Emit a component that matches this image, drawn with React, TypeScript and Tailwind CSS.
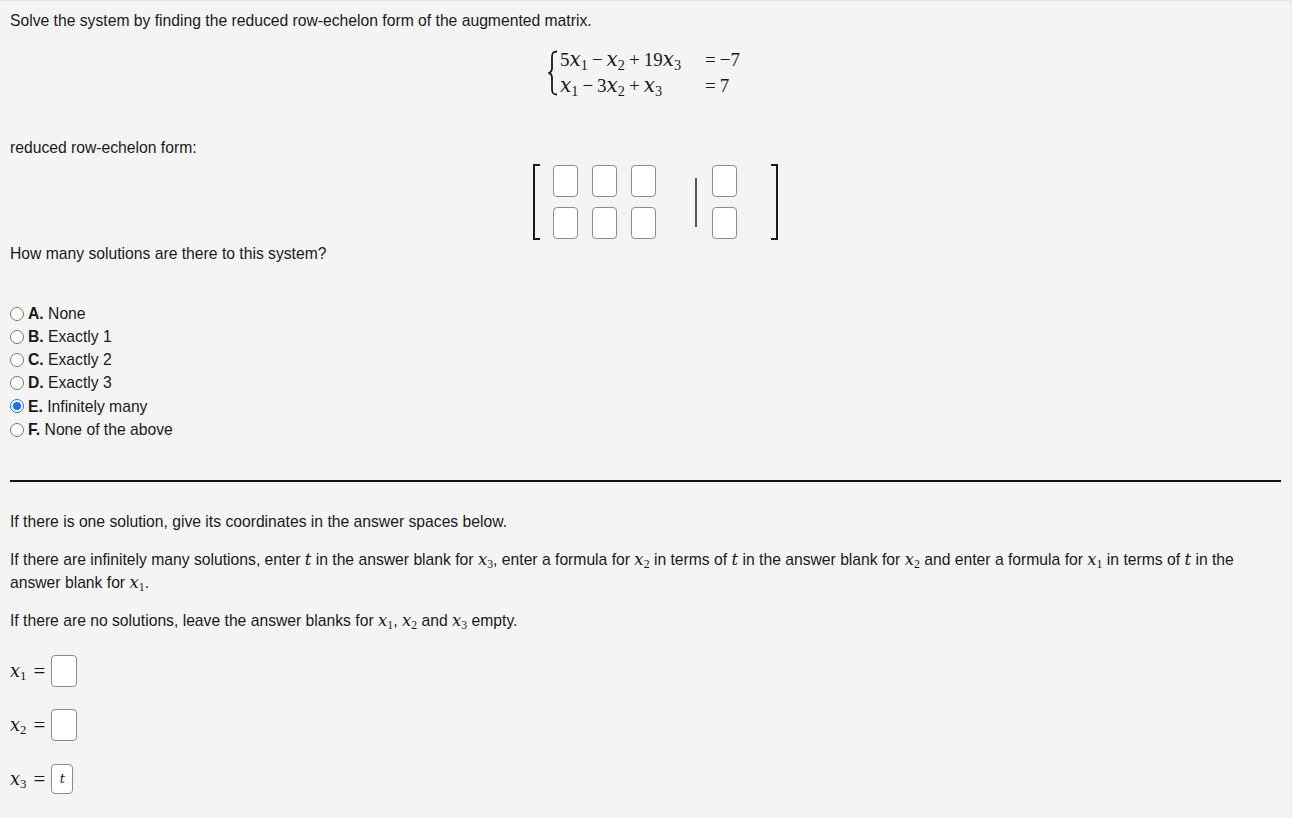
import React from 'react'

const serif = "font-['Liberation_Serif',serif]"
const mathVar = "font-['DejaVu_Serif',serif]"

function V({ n, s = 'x' }: { n?: number; s?: string }) {
  return (
    <span className="leading-none">
      <i className={`${mathVar} italic text-[1.05em]`}>{s}</i>
      {n != null && <sub className={`${serif} text-[75%] not-italic`}>{n}</sub>}
    </span>
  )
}

function Op({ c }: { c: string }) {
  return <span className="mx-[4px]">{c}</span>
}

function Box({ w = 'w-[25px]', h = 'h-[32px]', children }: { w?: string; h?: string; children?: React.ReactNode }) {
  return (
    <div className={`${w} ${h} border border-[#8c8c8c] rounded-[4px] bg-white flex items-center justify-center`}>
      {children}
    </div>
  )
}

const OPTIONS = [
  { k: 'A.', t: 'None' },
  { k: 'B.', t: 'Exactly 1' },
  { k: 'C.', t: 'Exactly 2' },
  { k: 'D.', t: 'Exactly 3' },
  { k: 'E.', t: 'Infinitely many', on: true },
  { k: 'F.', t: 'None of the above' },
]

function Radio({ on }: { on?: boolean }) {
  return (
    <span
      className={`inline-flex w-[14px] h-[14px] rounded-full border items-center justify-center bg-white ${
        on ? 'border-[#1a73e8]' : 'border-[#767676]'
      }`}
    >
      {on && <span className="w-[8px] h-[8px] rounded-full bg-[#1a73e8]" />}
    </span>
  )
}

export default function App() {
  return (
    <div className="min-h-[818px] bg-[#f4f4f4] border-t border-r border-[#e4e4e4] px-[10px] text-[15.7px] text-[#1a1a1a] font-['Liberation_Sans',Arial,sans-serif]">
      {/* ── prompt ── */}
      <p className="pt-[11px] leading-[18px]">
        Solve the system by finding the reduced row-echelon form of the augmented matrix.
      </p>

      {/* ── system ── */}
      <div className={`mt-[17px] ml-[537px] flex items-center ${serif} text-[19px]`}>
        <svg width="11" height="46" viewBox="0 0 11 46" className="mr-[2px]">
          <path
            d="M10 1.5 C6 1.5 5 3 5 7 L5 18 C5 21 4 22.5 1.5 23 C4 23.5 5 25 5 28 L5 39 C5 43 6 44.5 10 44.5"
            fill="none"
            stroke="#1a1a1a"
            strokeWidth="1.8"
          />
        </svg>
        <div className="grid grid-cols-[145px_auto] leading-[26px]">
          <div>
            5<V n={1} />
            <Op c="−" />
            <V n={2} />
            <Op c="+" />
            19<V n={3} />
          </div>
          <div>
            =<span className="ml-[4px]">−7</span>
          </div>
          <div>
            <V n={1} />
            <Op c="−" />3<V n={2} />
            <Op c="+" />
            <V n={3} />
          </div>
          <div>
            =<span className="ml-[4px]">7</span>
          </div>
        </div>
      </div>

      <p className="mt-[40px] leading-[18px]">reduced row-echelon form:</p>

      {/* ── matrix ── */}
      <div className="mt-[7px] ml-[523px] flex items-center h-[76px]">
        <div className="w-[7px] h-[76px] border-l-2 border-t-2 border-b-2 border-[#1a1a1a]" />
        <div className="ml-[13px] grid grid-cols-[25px_25px_25px] gap-x-[14px] gap-y-[10px]">
          {Array.from({ length: 6 }).map((_, i) => (
            <Box key={i} />
          ))}
        </div>
        <div className="ml-[39px] w-[2px] h-[49px] bg-[#555]" />
        <div className="ml-[15px] flex flex-col gap-[10px]">
          <Box />
          <Box />
        </div>
        <div className="ml-[34px] w-[7px] h-[76px] border-r-2 border-t-2 border-b-2 border-[#1a1a1a]" />
      </div>

      <p className="mt-[5px] leading-[18px]">How many solutions are there to this system?</p>

      {/* ── options ── */}
      <div className="mt-[39px]">
        {OPTIONS.map(o => (
          <div key={o.k} className="flex items-center h-[23.2px]">
            <Radio on={o.on} />
            <span className="ml-[4px]">
              <b>{o.k}</b> {o.t}
            </span>
          </div>
        ))}
      </div>

      <div className="mt-[39px] h-[2px] bg-[#111]" />

      {/* ── instructions ── */}
      <p className="mt-[28px] leading-[23px]">If there is one solution, give its coordinates in the answer spaces below.</p>
      <p className="mt-[15px] leading-[23px]">
        If there are infinitely many solutions, enter <V s="t" /> in the answer blank for <V n={3} />, enter a formula
        for <V n={2} /> in terms of <V s="t" /> in the answer blank for <V n={2} /> and enter a formula for{' '}
        <V n={1} /> in terms of <V s="t" /> in the answer blank for <V n={1} />.
      </p>
      <p className="mt-[15px] leading-[23px]">
        If there are no solutions, leave the answer blanks for <V n={1} />, <V n={2} /> and <V n={3} /> empty.
      </p>

      {/* ── answers ── */}
      <div className={`mt-[23px] flex flex-col ${serif} text-[17px]`}>
        {[1, 2].map(n => (
          <div key={n} className={`flex items-center h-[32px] ${n === 2 ? 'mt-[22px]' : ''}`}>
            <V n={n} />
            <span className="ml-[7px] mr-[6px] text-[21px] leading-none">=</span>
            <Box w="w-[26px]" />
          </div>
        ))}
        <div className="mt-[23px] flex items-center h-[30px]">
          <V n={3} />
          <span className="ml-[7px] mr-[6px] text-[21px] leading-none">=</span>
          <Box w="w-[22px]" h="h-[30px]">
            <i className={`${mathVar} text-[13px]`}>t</i>
          </Box>
        </div>
      </div>
    </div>
  )
}
